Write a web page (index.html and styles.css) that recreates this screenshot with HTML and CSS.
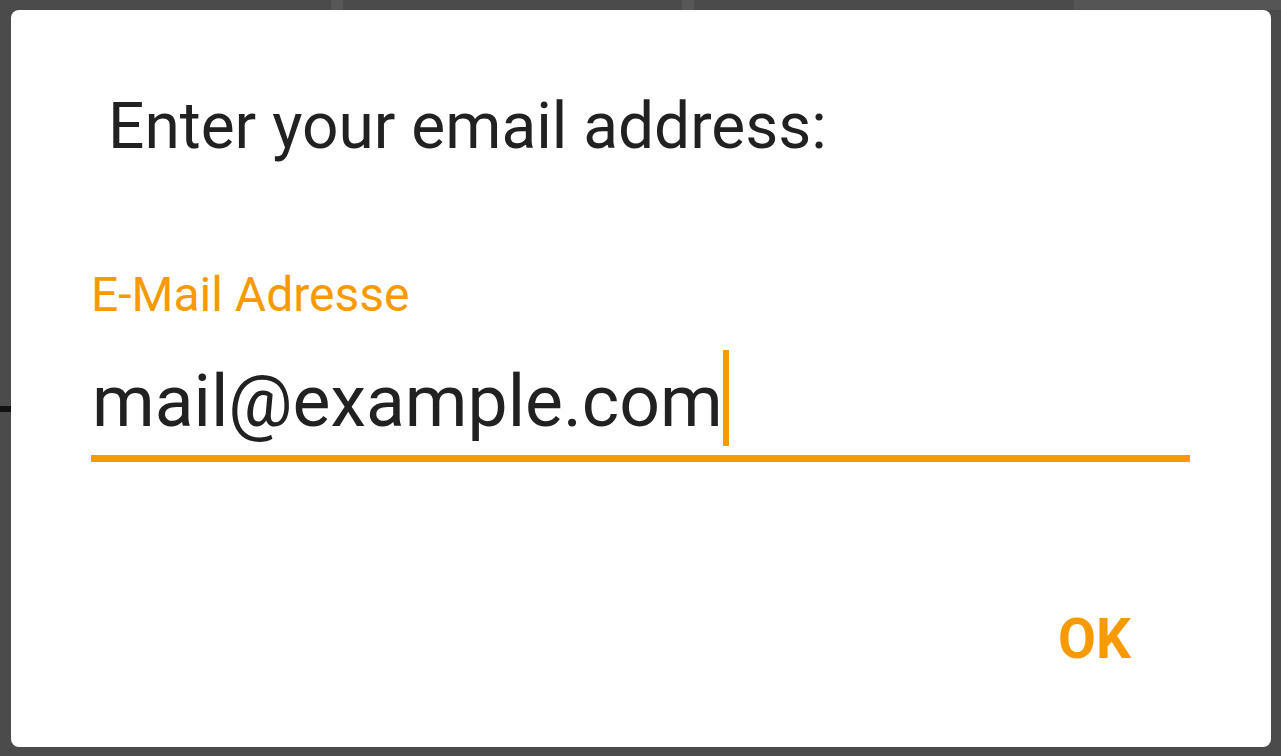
FILE: index.html
```html
<!DOCTYPE html>
<html lang="en">
<head>
<meta charset="utf-8">
<title>Enter your email address</title>
<link rel="stylesheet" href="styles.css">
</head>
<body>
<div class="screen">
  <div class="dialog" role="dialog">
    <h1 class="dialog-title">Enter your email address:</h1>
    <div class="field">
      <label class="field-label">E-Mail Adresse</label>
      <div class="field-input">
        <span class="field-value">mail@example.com</span><span class="cursor"></span>
      </div>
    </div>
    <div class="actions">
      <button class="btn-ok">OK</button>
    </div>
  </div>
</div>
</body>
</html>
```

FILE: styles.css
```css
html, body {
  margin: 0;
  padding: 0;
  height: 100%;
}

body {
  font-family: Roboto, "Noto Sans", "Liberation Sans", sans-serif;
  background-color: #4b4b4b;
  background-image:
    linear-gradient(to bottom, transparent 406px, #111 406px, #111 412px, transparent 412px),
    linear-gradient(to right, transparent 331px, #575757 331px, #575757 343px, transparent 343px, transparent 682px, #575757 682px, #575757 694px, transparent 694px, transparent 1074px, #555 1074px);
  background-size: 11px 100%, 100% 10px;
  background-repeat: no-repeat;
  overflow: hidden;
}

.screen {
  box-sizing: border-box;
  height: 756px;
  padding: 10px 10px 9px 11px;
}

.dialog {
  box-sizing: border-box;
  height: 737px;
  background: #ffffff;
  border-radius: 8px;
  padding: 80px 81px 0 80px;
  display: flex;
  flex-direction: column;
}

.dialog-title {
  margin: 0 0 0 17px;
  font-size: 64px;
  line-height: 74px;
  font-weight: 400;
  color: #212121;
}

.field {
  margin-top: 102px;
  border-bottom: 7px solid #f69a00;
}

.field-label {
  display: block;
  padding-left: 0;
  font-size: 48px;
  line-height: 57px;
  color: #f69a00;
}

.field-input {
  display: flex;
  align-items: flex-start;
  margin-top: 27px;
  padding: 0 0 9px 1px;
}

.field-value {
  margin-top: 10px;
  font-size: 71.5px;
  line-height: 84px;
  color: #212121;
}

.cursor {
  width: 6px;
  height: 96px;
  margin-left: 0;
  background: #f69a00;
}

.actions {
  display: flex;
  justify-content: flex-end;
  margin-top: 145px;
}

.btn-ok {
  border: none;
  background: transparent;
  padding: 0 59px 0 0;
  font-family: Roboto, "Noto Sans", "Liberation Sans", sans-serif;
  font-size: 55px;
  line-height: 64px;
  font-weight: 700;
  color: #f69a00;
}
```
